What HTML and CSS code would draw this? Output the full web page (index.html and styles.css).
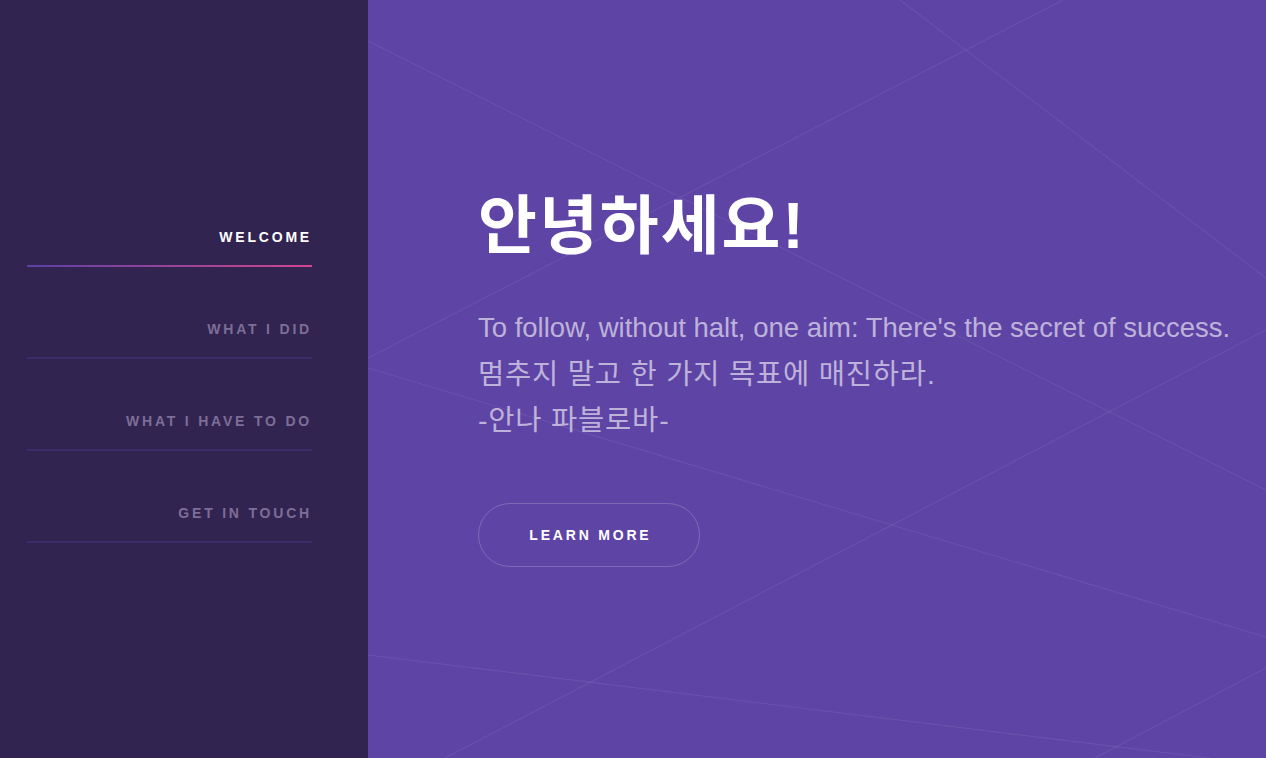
FILE: index.html
```html
<!DOCTYPE html>
<html lang="ko">
<head>
<meta charset="utf-8">
<title>Welcome</title>
<link rel="stylesheet" href="styles.css">
</head>
<body>
<div class="page">
  <aside class="sidebar">
    <nav class="nav">
      <a class="nav-item active" href="#welcome">WELCOME</a>
      <a class="nav-item" href="#did">WHAT I DID</a>
      <a class="nav-item" href="#todo">WHAT I HAVE TO DO</a>
      <a class="nav-item" href="#contact">GET IN TOUCH</a>
    </nav>
  </aside>
  <main class="main">
    <svg class="bg-lines" viewBox="0 0 898 758" preserveAspectRatio="none" aria-hidden="true">
      <g stroke="rgba(255,255,255,0.075)" stroke-width="1.1" fill="none">
        <line x1="0" y1="41" x2="898" y2="490"/>
        <line x1="532" y1="0" x2="898" y2="278"/>
        <line x1="695" y1="0" x2="0" y2="358"/>
        <line x1="0" y1="368" x2="898" y2="637"/>
        <line x1="898" y1="330" x2="77" y2="758"/>
        <line x1="0" y1="655" x2="898" y2="765"/>
        <line x1="898" y1="668" x2="727" y2="758"/>
      </g>
    </svg>
    <section class="intro">
      <h1 class="title">안녕하세요!</h1>
      <p class="quote">
        <span class="line">To follow, without halt, one aim: There's the secret of success.</span>
        <span class="line ko">멈추지 말고 한 가지 목표에 매진하라.</span>
        <span class="line ko">-안나 파블로바-</span>
      </p>
      <a class="btn" href="#did">LEARN MORE</a>
    </section>
  </main>
</div>
</body>
</html>
```
FILE: styles.css
```css
* { box-sizing: border-box; }
html, body { margin: 0; padding: 0; }
body {
  font-family: "Liberation Sans", "Noto Sans CJK KR", Arial, sans-serif;
  background: #5e44a5;
  overflow: hidden;
}
.page {
  display: flex;
  width: 1266px;
  height: 758px;
}
.sidebar {
  width: 368px;
  flex: none;
  background: #312451;
  padding: 229px 56px 0 27px;
}
.nav {
  display: flex;
  flex-direction: column;
  gap: 54px;
}
.nav-item {
  display: block;
  text-align: right;
  font-size: 14px;
  line-height: 16px;
  font-weight: bold;
  letter-spacing: 0.2em;
  color: #7d6e97;
  text-decoration: none;
  padding-bottom: 20px;
  border-bottom: 2px solid #3b2b67;
}
.nav-item.active {
  color: #ffffff;
  border-bottom: none;
  padding-bottom: 22px;
  background: linear-gradient(to right, #5c40a4, #d1478f) no-repeat left bottom / 100% 2px;
}
.main {
  flex: 1;
  position: relative;
  background: #5e44a5;
  padding: 183px 0 0 110px;
}
.bg-lines {
  position: absolute;
  left: 0;
  top: 0;
  width: 100%;
  height: 100%;
}
.intro {
  position: relative;
  display: flex;
  flex-direction: column;
  align-items: flex-start;
}
.title {
  margin: 0;
  color: #ffffff;
  font-family: "Liberation Sans", "Noto Sans CJK KR", sans-serif;
  font-size: 64px;
  line-height: 86px;
  letter-spacing: 2px;
  font-weight: bold;
}
.quote {
  margin: 36px 0 0;
  color: rgba(255, 255, 255, 0.6);
  font-size: 27.5px;
}
.line {
  display: block;
  height: 46px;
  line-height: 46px;
  white-space: nowrap;
}
.line.ko {
  font-size: 28.5px;
  letter-spacing: 0.8px;
}
.btn {
  display: block;
  margin-top: 60px;
  width: 222px;
  height: 64px;
  line-height: 62px;
  text-align: center;
  border: 1px solid rgba(255, 255, 255, 0.2);
  border-radius: 32px;
  color: #ffffff;
  font-size: 14px;
  font-weight: bold;
  letter-spacing: 0.2em;
  text-indent: 0.2em;
  text-decoration: none;
}
```
